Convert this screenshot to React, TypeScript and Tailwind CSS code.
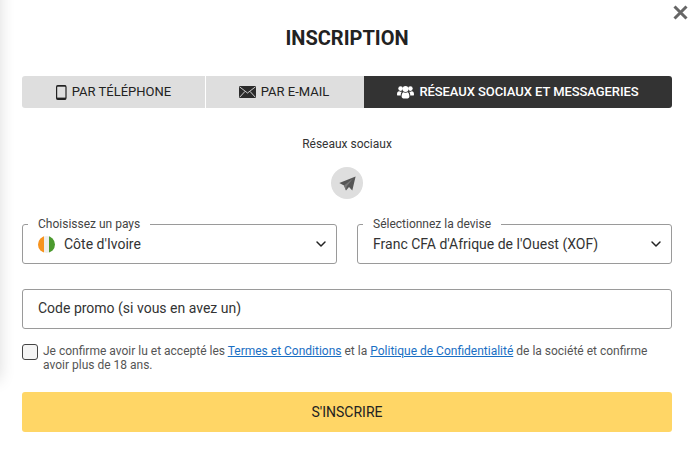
import { ChevronDown } from "lucide-react";

function PhoneIcon() {
  return (
    <svg width="11" height="15" viewBox="0 0 11 15" className="shrink-0">
      <rect x="0.6" y="0.6" width="9.4" height="13.8" rx="1.4" fill="none" stroke="#222" strokeWidth="1.2" />
      <rect x="0.6" y="12.6" width="9.4" height="1.8" fill="#222" />
      <rect x="0.6" y="0.6" width="9.4" height="1" fill="#222" />
    </svg>
  );
}

function MailIcon() {
  return (
    <svg width="17" height="12" viewBox="0 0 17 12" className="shrink-0">
      <rect width="17" height="12" rx="0.5" fill="#2b2b2b" />
      <path d="M0.5 0.8 L8.5 7 L16.5 0.8 M0.5 11.4 L6 5.4 M16.5 11.4 L11 5.4" fill="none" stroke="#ddd" strokeWidth="0.9" />
    </svg>
  );
}

function UsersIcon() {
  return (
    <svg width="17" height="14" viewBox="0 0 17 14" className="shrink-0" fill="#fff">
      <circle cx="3.6" cy="3.6" r="2.3" />
      <circle cx="13.4" cy="3.6" r="2.3" />
      <path d="M0 9.4 C0 7 1 6 2.4 6.2 C3.2 6.8 4 6.9 4.8 6.7 C3.9 7.9 3.7 9 3.8 10.6 L1.4 10.6 C0.5 10.6 0 10.2 0 9.4 Z" />
      <path d="M17 9.4 C17 7 16 6 14.6 6.2 C13.8 6.8 13 6.9 12.2 6.7 C13.1 7.9 13.3 9 13.2 10.6 L15.6 10.6 C16.5 10.6 17 10.2 17 9.4 Z" />
      <circle cx="8.5" cy="4" r="2.9" />
      <path d="M4.6 11.6 C4.6 8.6 5.6 7 6.9 7.3 C8 8 9 8 10.1 7.3 C11.4 7 12.4 8.6 12.4 11.6 C12.4 12.8 11.6 13.4 10.6 13.4 L6.4 13.4 C5.4 13.4 4.6 12.8 4.6 11.6 Z" />
    </svg>
  );
}

function PlaneIcon() {
  return (
    <svg width="17" height="15" viewBox="0 0 17 15">
      <path d="M16.6 0.4 L0.3 7 L5 9.5 L7 14.6 L10 11 L13.3 14.6 Z" fill="#555" />
      <path d="M5 9.5 L14 2.6 L7.6 10.4 L7 14.6" fill="#777" />
    </svg>
  );
}

function SelectBox({ label, children }: { label: string; children: React.ReactNode }) {
  return (
    <div className="relative flex-1 h-10 border border-[#9a9a9a] rounded-[3px] flex items-center justify-between pl-[15px] pr-[7px]">
      <span className="absolute left-[5px] -top-[9px] bg-white px-[10px] text-xs leading-4 text-[#444]">{label}</span>
      {children}
      <ChevronDown size={16} strokeWidth={2.2} color="#222" />
    </div>
  );
}

export default function App() {
  return (
    <div className="relative w-[695px] h-[464px] overflow-hidden bg-white font-['Roboto',sans-serif] text-[#222]">
      {/* page shadow coming in from the left */}
      <div className="absolute -left-5 -top-5 w-5 h-[400px] shadow-[0_0_16px_rgba(0,0,0,0.14)]" />
      <button className="absolute right-[7px] top-[5px] text-[#666]">
        <svg width="15" height="15" viewBox="0 0 15 15">
          <path d="M1.5 1.5 L13.5 13.5 M13.5 1.5 L1.5 13.5" stroke="#666" strokeWidth="3" />
        </svg>
      </button>

      <div className="pl-[22px] pr-[23px] flex flex-col">
        <h1 className="mt-[27px] text-center text-[20px] leading-[22px] font-bold text-[#222]">INSCRIPTION</h1>

        {/* Tabs */}
        <div className="mt-[27px] flex h-8 text-[13px]">
          <div className="w-[183px] bg-[#dedede] rounded-l-[3px] flex items-center justify-center gap-[5px]">
            <PhoneIcon />
            <span>PAR TÉLÉPHONE</span>
          </div>
          <div className="ml-px w-[158px] bg-[#dedede] flex items-center justify-center gap-[5px] pr-[2px]">
            <MailIcon />
            <span>PAR E-MAIL</span>
          </div>
          <div className="flex-1 bg-[#333] text-white font-medium tracking-[-0.07px] rounded-r-[3px] flex items-center justify-center gap-[5px]">
            <UsersIcon />
            <span>RÉSEAUX SOCIAUX ET MESSAGERIES</span>
          </div>
        </div>

        <p className="mt-[28px] text-center text-xs leading-4 text-[#333]">Réseaux sociaux</p>

        <div className="mt-[15px] self-center w-8 h-8 rounded-full bg-[#dedede] flex items-center justify-center">
          <PlaneIcon />
        </div>

        {/* Country and currency */}
        <div className="mt-[25px] flex gap-5 text-sm text-[#333]">
          <SelectBox label="Choisissez un pays">
            <div className="flex items-center gap-[9px]">
              <span className="w-[17px] h-[17px] rounded-full overflow-hidden flex">
                <span className="flex-1 bg-[#f7931e]" />
                <span className="flex-1 bg-[#eeeeee]" />
                <span className="flex-1 bg-[#4b9a2e]" />
              </span>
              <span>Côte d'Ivoire</span>
            </div>
          </SelectBox>
          <SelectBox label="Sélectionnez la devise">
            <span>Franc CFA d'Afrique de l'Ouest (XOF)</span>
          </SelectBox>
        </div>

        {/* Promo code */}
        <div className="mt-[25px] h-10 border border-[#9a9a9a] rounded-[3px] flex items-center pl-[15px] pb-[2px] text-sm text-[#333]">
          Code promo (si vous en avez un)
        </div>

        {/* Terms */}
        <div className="mt-[15px] flex gap-[5px]">
          <span className="w-4 h-4 shrink-0 rounded-[3px] border border-[#444] bg-[#f5f5f5]" />
          <p className="text-xs leading-[14px] text-[#555]">
            Je confirme avoir lu et accepté les <a className="text-[#1a6fc4] underline">Termes et Conditions</a> et la{" "}
            <a className="text-[#1a6fc4] underline">Politique de Confidentialité</a> de la société et confirme avoir plus de 18 ans.
          </p>
        </div>

        <button className="mt-[20px] h-10 rounded-[3px] bg-[#ffd666] text-sm text-[#222]">S'INSCRIRE</button>
      </div>
    </div>
  );
}
